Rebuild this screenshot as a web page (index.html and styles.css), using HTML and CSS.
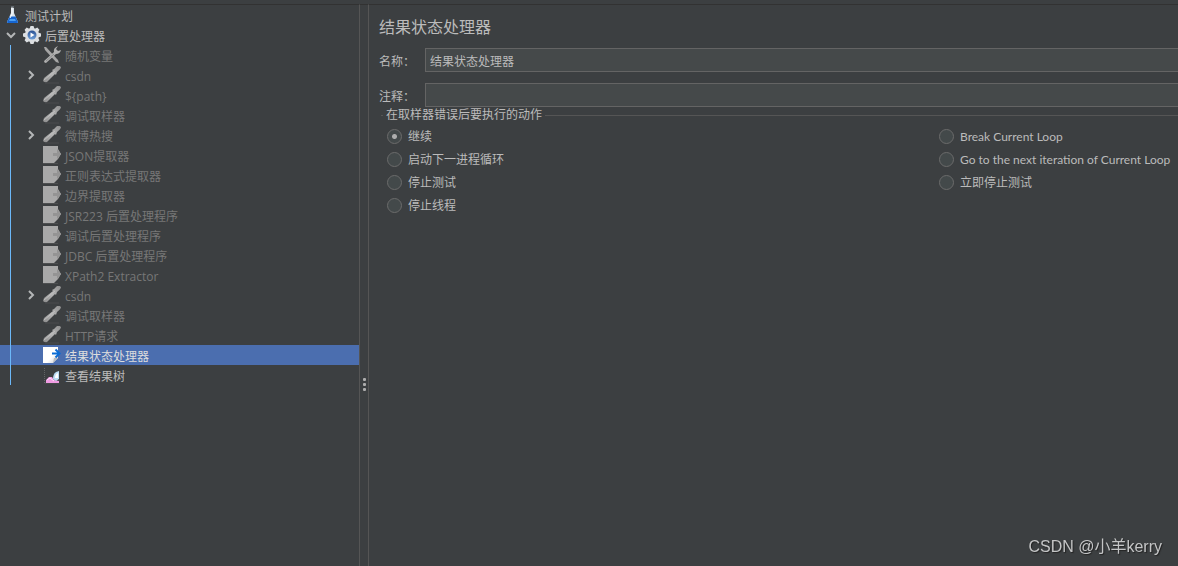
FILE: index.html
```html
<!DOCTYPE html>
<html lang="zh-CN">
<head>
  <meta charset="UTF-8" />
  <meta name="viewport" content="width=device-width, initial-scale=1.0"/>
  <title>结果状态处理器</title>
  <link rel="stylesheet" href="styles.css">
</head>
<body>
  <!-- shared icons -->
  <svg class="sprite" aria-hidden="true">
    <defs>
      <linearGradient id="metal" x1="0" y1="1" x2="1" y2="0">
        <stop offset="0" stop-color="#8a8a8a"/>
        <stop offset=".5" stop-color="#b5b5b5"/>
        <stop offset="1" stop-color="#8d8d8d"/>
      </linearGradient>
      <linearGradient id="paper" x1="0" y1="0" x2="1" y2="1">
        <stop offset=".6" stop-color="#ffffff"/>
        <stop offset="1" stop-color="#c9c9c9"/>
      </linearGradient>
      <linearGradient id="lens" x1="0" y1="0" x2="0" y2="1">
        <stop offset="0" stop-color="#284f92"/>
        <stop offset="1" stop-color="#6f9fd8"/>
      </linearGradient>
    </defs>
    <symbol id="chevron" viewBox="0 0 10 10">
      <path d="M3 1l4 4-4 4" fill="none" stroke="#b4b6b7" stroke-width="2"/>
    </symbol>
    <symbol id="flask" viewBox="0 0 18 18">
      <path d="M8 2h3v5l4 9q0 1-1 1H5q-1 0-1-1l4-9z" fill="#d9e4ec"/>
      <path d="M6.500 10.500h6l2.500 5.500q0 1-1 1H5q-1 0-1-1z" fill="#1565d0"/>
      <path d="M7 13h5l1 2H6z" fill="#4ba0f4"/>
      <path d="M9 1v7l-2 4" fill="none" stroke="#ffffff"/>
      <path d="M8 1h3" stroke="#8b969e"/>
    </symbol>
    <symbol id="gear" viewBox="0 0 18 18">
      <g fill="#dcdfe2">
        <circle cx="9" cy="9" r="7"/>
        <path d="M7.500 0h3l1 3h-5zM7.500 18h3l1-3h-5zM0 7.500v3l3 1v-5zM18 7.500v3l-3 1v-5z"/>
        <path d="M7.500 0h3l1 3h-5zM7.500 18h3l1-3h-5zM0 7.500v3l3 1v-5zM18 7.500v3l-3 1v-5z" transform="rotate(45 9 9)"/>
      </g>
      <circle cx="9" cy="9" r="4.500" fill="url(#lens)"/>
      <path d="M7.500 6.500l4 2.500-4 2.500z" fill="#ffffff"/>
    </symbol>
    <symbol id="tools" viewBox="0 0 18 18">
      <path d="M1 1l2 0 12 13 1 3-3-1L2 4z" fill="#a5a5a5"/>
      <path d="M1 15L11 6q-1-4 4-6l-2 3 2 2 3-1q-1 4-5 4L3 17q-2 0-2-2z" fill="#b0b0b0"/>
      <path d="M3 15l8-7" stroke="#8c8c8c"/>
    </symbol>
    <symbol id="dropper" viewBox="0 0 18 18">
      <path d="M0 15l1-3L10 5l-1-1 2-1 3-3q2-1 4 1 0 2-4 5l-1 3-1-1L4 16q-2 1-4-1z" fill="url(#metal)"/>
      <path d="M1 14l11-9" stroke="#bfbfbf"/>
      <path d="M2 17h14" stroke="#4b4d4e"/>
    </symbol>
    <symbol id="page-off" viewBox="0 0 18 18">
      <path d="M0 0h15v3l3 5-3 5-4 4H0z" fill="#a9a9a9"/>
      <path d="M10 7h4V3l4 5-4 5v-3h-4z" fill="#949494"/>
      <path d="M0 17.500h15" stroke="#4d4f50"/>
    </symbol>
    <symbol id="page" viewBox="0 0 18 18">
      <path d="M0 1h15v11l-5 5H0z" fill="url(#paper)"/>
      <path d="M10 17l1-5h4z" fill="#b9bcc0"/>
      <path d="M9 7.500h7M12.500 3.500l4 4-4 4" fill="none" stroke="#0b6cd4" stroke-width="2"/>
    </symbol>
    <symbol id="chart" viewBox="0 0 18 18">
      <path d="M1.500 2v15H16" fill="none" stroke="#626466" stroke-dasharray="1 1"/>
      <path d="M3 17v-3l3-3h3l2 3 5 1v2z" fill="#ef9be2"/>
      <path d="M4 14l3-2 4 3" fill="none" stroke="#ffe1fb"/>
      <path d="M10 13q0-5 3-7l3-1v8l-3 2z" fill="#bcdcf5"/>
      <path d="M12 12q0-4 3-5v5z" fill="#ffffff"/>
    </symbol>
  </svg>

  <div class="app">
    <nav class="tree" aria-label="测试计划">
      <ul>
        <li><div class="row root"><svg class="icon"><use href="#flask"/></svg><span>测试计划</span></div></li>
        <li>
          <div class="row"><button class="toggle open" aria-label="后置处理器"><svg><use href="#chevron"/></svg></button><svg class="icon"><use href="#gear"/></svg><span>后置处理器</span></div>
          <ul class="children">
            <li class="row off"><svg class="icon"><use href="#tools"/></svg><span>随机变量</span></li>
            <li class="row off"><button class="toggle" aria-label="csdn"><svg><use href="#chevron"/></svg></button><svg class="icon"><use href="#dropper"/></svg><span>csdn</span></li>
            <li class="row off"><svg class="icon"><use href="#dropper"/></svg><span>${path}</span></li>
            <li class="row off"><svg class="icon"><use href="#dropper"/></svg><span>调试取样器</span></li>
            <li class="row off"><button class="toggle" aria-label="微博热搜"><svg><use href="#chevron"/></svg></button><svg class="icon"><use href="#dropper"/></svg><span>微博热搜</span></li>
            <li class="row off"><svg class="icon"><use href="#page-off"/></svg><span>JSON提取器</span></li>
            <li class="row off"><svg class="icon"><use href="#page-off"/></svg><span>正则表达式提取器</span></li>
            <li class="row off"><svg class="icon"><use href="#page-off"/></svg><span>边界提取器</span></li>
            <li class="row off"><svg class="icon"><use href="#page-off"/></svg><span>JSR223 后置处理程序</span></li>
            <li class="row off"><svg class="icon"><use href="#page-off"/></svg><span>调试后置处理程序</span></li>
            <li class="row off"><svg class="icon"><use href="#page-off"/></svg><span>JDBC 后置处理程序</span></li>
            <li class="row off"><svg class="icon"><use href="#page-off"/></svg><span>XPath2 Extractor</span></li>
            <li class="row off"><button class="toggle" aria-label="csdn"><svg><use href="#chevron"/></svg></button><svg class="icon"><use href="#dropper"/></svg><span>csdn</span></li>
            <li class="row off"><svg class="icon"><use href="#dropper"/></svg><span>调试取样器</span></li>
            <li class="row off"><svg class="icon"><use href="#dropper"/></svg><span>HTTP请求</span></li>
            <li class="row selected"><svg class="icon"><use href="#page"/></svg><span>结果状态处理器</span></li>
            <li class="row"><svg class="icon"><use href="#chart"/></svg><span>查看结果树</span></li>
          </ul>
        </li>
      </ul>
    </nav>
    <div class="splitter"><i></i><i></i><i></i></div>
    <main class="panel">
      <h1>结果状态处理器</h1>
      <div class="field">
        <label for="name">名称：</label>
        <input type="text" id="name" value="结果状态处理器">
      </div>
      <div class="field">
        <label for="comment">注释：</label>
        <input type="text" id="comment">
      </div>
      <fieldset>
        <legend>在取样器错误后要执行的动作</legend>
        <div class="actions">
          <label><input type="radio" name="action" checked>继续</label>
          <label><input type="radio" name="action">Break Current Loop</label>
          <label><input type="radio" name="action">启动下一进程循环</label>
          <label><input type="radio" name="action">Go to the next iteration of Current Loop</label>
          <label><input type="radio" name="action">停止测试</label>
          <label><input type="radio" name="action">立即停止测试</label>
          <label><input type="radio" name="action">停止线程</label>
        </div>
      </fieldset>
    </main>
  </div>
  <div class="watermark">CSDN @小羊kerry</div>
</body>
</html>
```
FILE: styles.css
```css
* { box-sizing: border-box; }
body {
  margin: 0;
  background: #3c3f41;
  color: #bbbbbb;
  font: 12px/20px Lato, "Noto Sans CJK SC", sans-serif;
}
ul {
  list-style: none;
  margin: 0;
  padding: 0;
}
.sprite {
  position: absolute;
  width: 0;
  height: 0;
}
.app {
  display: flex;
  min-height: 100vh;
  padding-top: 4px;
}

/* tree */
.tree {
  flex: 0 0 360px;
  border-top: 1px solid #323232;
  border-right: 1px solid #555555;
  font-family: "Open Sans", "Noto Sans CJK SC", sans-serif;
}
.row {
  display: flex;
  align-items: center;
  gap: 4px;
  height: 20px;
  padding-left: 3px;
  white-space: nowrap;
}
.row span { padding-top: 4px; }
.icon {
  width: 18px;
  height: 18px;
  flex: none;
}
.toggle {
  display: flex;
  justify-content: center;
  width: 16px;
  padding: 0;
  border: 0;
  background: none;
}
.toggle svg {
  width: 10px;
  height: 10px;
}
.toggle.open svg { transform: rotate(90deg); }
.children { position: relative; }
.children .row { padding-left: 43px; }
.children .row:has(.toggle) { padding-left: 23px; }
.children::before {
  content: "";
  position: absolute;
  left: 10px;
  top: 0;
  bottom: 0;
  width: 1px;
  background: #6cb8f8;
}
.off { color: #777777; }
.selected {
  background: #4b6eaf;
  color: #dddddd;
}

/* drag handle between the panes */
.splitter {
  display: flex;
  flex-direction: column;
  align-items: center;
  flex: 0 0 8px;
  gap: 2px;
  padding-top: 373px;
  border-top: 1px solid #323232;
}
.splitter i {
  width: 3px;
  height: 3px;
  border-radius: 1px;
  background: #adadad;
}

/* form */
.panel {
  flex: 1;
  min-width: 0;
  padding: 10px 0 0 10px;
  border-top: 1px solid #323232;
  border-left: 1px solid #555555;
}
h1 {
  margin: 0 0 9px;
  font-size: 16px;
  font-weight: normal;
  line-height: 24px;
}
.field {
  display: flex;
  align-items: center;
  margin-bottom: 11px;
}
.field label {
  width: 46px;
  padding-top: 4px;
}
.field input {
  flex: 1;
  min-width: 0;
  height: 24px;
  padding: 0 4px;
  border: 1px solid #646464;
  border-right: 0;
  background: #45494a;
  color: #bbbbbb;
  font: inherit;
}
fieldset {
  margin: -13px 0 0 2px;
  padding: 0 0 0 6px;
  border: 0;
}
legend {
  display: flex;
  align-items: center;
  gap: 3px;
  width: calc(100% + 6px);
  margin-left: -6px;
  padding: 0;
  line-height: 20px;
}
legend::before,
legend::after {
  content: "";
  width: 2px;
  height: 1px;
  background: #555555;
}
legend::after { flex: 1; }
.actions {
  display: grid;
  grid-template-columns: 1fr 239px;
}
.actions label {
  display: flex;
  align-items: center;
  gap: 6px;
  height: 23px;
  white-space: nowrap;
}
.actions input {
  appearance: none;
  flex: none;
  width: 15px;
  height: 15px;
  margin: 0;
  border: 1px solid #6b6b6b;
  border-radius: 50%;
  background: #43494a;
}
.actions input:checked { background: radial-gradient(circle, #adadad 2px, #43494a 3px); }

.watermark {
  position: fixed;
  right: 16px;
  bottom: 7px;
  color: #c4c5c6;
  font: 16px/24px "Liberation Sans", "Noto Sans CJK SC", sans-serif;
  text-shadow: 1px 1px 1px #222222;
}
```
